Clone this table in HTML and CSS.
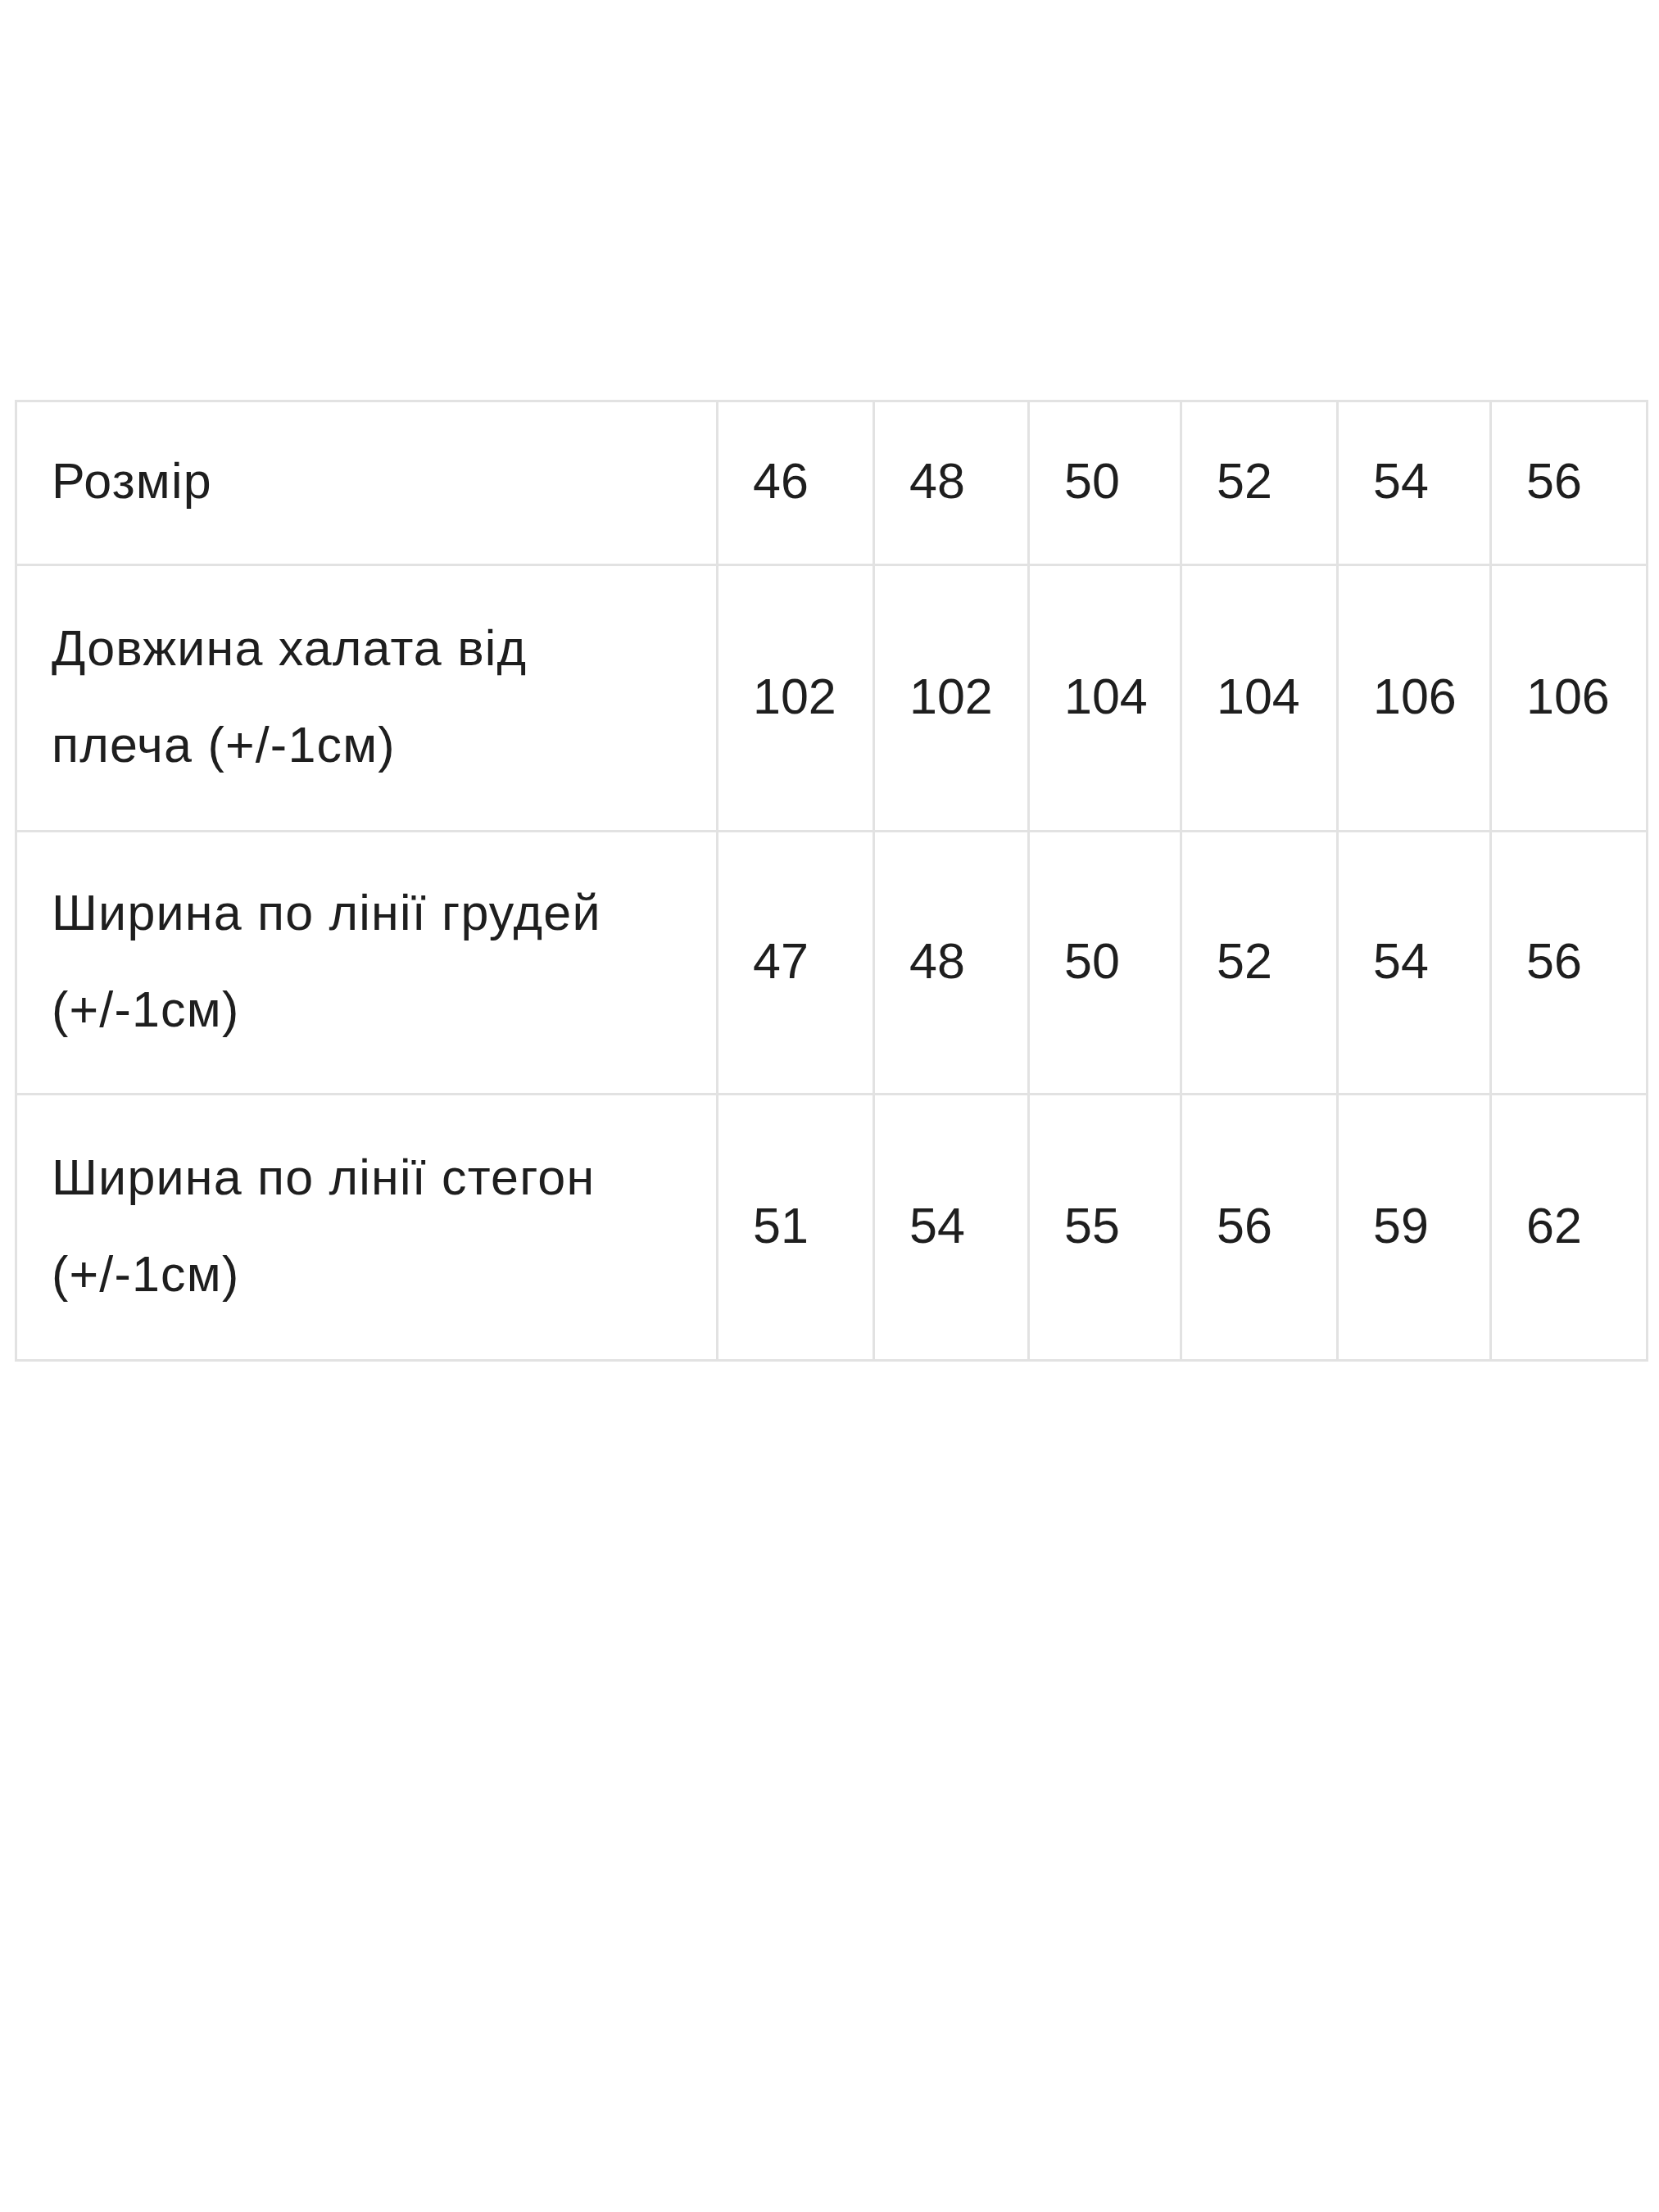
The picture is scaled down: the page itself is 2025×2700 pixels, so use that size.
FILE: index.html
```html
<!DOCTYPE html>
<html lang="uk">
<head>
<meta charset="utf-8">
<title>Розмірна сітка</title>
<link rel="stylesheet" href="styles.css">
</head>
<body>
<main class="page">
  <table class="size-table">
    <colgroup>
      <col class="col-label">
      <col class="col-s1">
      <col class="col-s2">
      <col class="col-s3">
      <col class="col-s4">
      <col class="col-s5">
      <col class="col-s6">
    </colgroup>
    <tbody>
      <tr class="row-head">
        <td class="label">Розмір</td>
        <td>46</td><td>48</td><td>50</td><td>52</td><td>54</td><td>56</td>
      </tr>
      <tr class="row-tall">
        <td class="label">Довжина халата від плеча (+/-1см)</td>
        <td>102</td><td>102</td><td>104</td><td>104</td><td>106</td><td>106</td>
      </tr>
      <tr class="row-tall row-mid">
        <td class="label">Ширина по лінії грудей (+/-1см)</td>
        <td>47</td><td>48</td><td>50</td><td>52</td><td>54</td><td>56</td>
      </tr>
      <tr class="row-tall">
        <td class="label">Ширина по лінії стегон (+/-1см)</td>
        <td>51</td><td>54</td><td>55</td><td>56</td><td>59</td><td>62</td>
      </tr>
    </tbody>
  </table>
</main>
</body>
</html>
```

FILE: styles.css
```css
html, body {
  margin: 0;
  padding: 0;
  background: #ffffff;
}

.page {
  padding: 488px 16px 0 18px;
}

.size-table {
  border-collapse: collapse;
  table-layout: fixed;
  width: 1991px;
  font-family: "Liberation Sans", Arial, sans-serif;
  font-size: 61px;
  line-height: 118px;
  color: #1e1e1e;
}

.col-label { width: 856px; }
.col-s1 { width: 191px; }
.col-s2 { width: 189px; }
.col-s3 { width: 186px; }
.col-s4 { width: 191px; }
.col-s5 { width: 187px; }
.col-s6 { width: 191px; }

.size-table td {
  border: 3px solid #e2e2e2;
  padding: 37px 20px 42px 42px;
  vertical-align: middle;
  text-align: left;
  white-space: nowrap;
}

.size-table .row-tall td {
  padding-top: 41px;
  padding-bottom: 45px;
}

.size-table .row-mid td {
  padding-top: 39px;
  padding-bottom: 43px;
}

.size-table td.label {
  white-space: normal;
  letter-spacing: 1.2px;
  padding-right: 100px;
}
```
